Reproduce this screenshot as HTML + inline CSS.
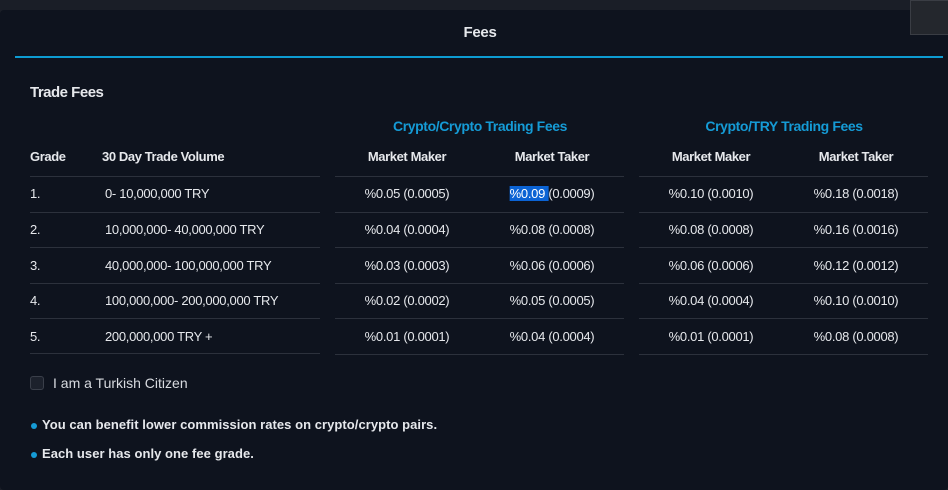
<!DOCTYPE html><html><head><style>
*{margin:0;padding:0;box-sizing:border-box}
body{width:948px;height:482px;background:#1a1e27;font-family:"Liberation Sans",sans-serif;color:#e6e8ec;position:relative;overflow:hidden}
.panel{position:absolute;left:0;top:10px;width:948px;height:480px;background:#0e131e;border-radius:4px}
.t{position:absolute;white-space:nowrap;font-size:13px;letter-spacing:-0.3px}
.b{font-weight:bold}
.c{transform:translateX(-50%)}
.ln{position:absolute;height:1px;background:#2c313c}
.blue{color:#159bd6}
.h{font-size:13px;letter-spacing:-0.4px}
</style></head><body>
<div class="panel"></div>
<div style="position:absolute;left:910px;top:0;width:40px;height:35px;background:#24272d;border:1px solid #3a3d44"></div>
<div class="t b c" style="left:480px;top:24px;font-size:15px">Fees</div>
<div style="position:absolute;left:15px;top:56px;width:928px;height:2px;background:#0d9bd2"></div>
<div class="t b" style="left:30px;top:84px;font-size:15px;letter-spacing:-0.5px">Trade Fees</div>
<div class="t b c blue" style="left:480px;top:118px;font-size:14px;letter-spacing:-0.4px">Crypto/Crypto Trading Fees</div>
<div class="t b c blue" style="left:784px;top:118px;font-size:14px;letter-spacing:-0.4px">Crypto/TRY Trading Fees</div>
<div class="t b h" style="left:30px;top:149px">Grade</div>
<div class="t b h" style="left:102px;top:149px">30 Day Trade Volume</div>
<div class="t b c h" style="left:407px;top:149px">Market Maker</div>
<div class="t b c h" style="left:552px;top:149px">Market Taker</div>
<div class="t b c h" style="left:711px;top:149px">Market Maker</div>
<div class="t b c h" style="left:856px;top:149px">Market Taker</div>
<div class="ln" style="left:30px;top:176px;width:290px"></div><div class="ln" style="left:335px;top:176px;width:289px"></div><div class="ln" style="left:639px;top:176px;width:289px"></div>
<div class="ln" style="left:30px;top:212px;width:290px"></div><div class="ln" style="left:335px;top:212px;width:289px"></div><div class="ln" style="left:639px;top:212px;width:289px"></div>
<div class="ln" style="left:30px;top:247px;width:290px"></div><div class="ln" style="left:335px;top:247px;width:289px"></div><div class="ln" style="left:639px;top:247px;width:289px"></div>
<div class="ln" style="left:30px;top:283px;width:290px"></div><div class="ln" style="left:335px;top:283px;width:289px"></div><div class="ln" style="left:639px;top:283px;width:289px"></div>
<div class="ln" style="left:30px;top:318px;width:290px"></div><div class="ln" style="left:335px;top:318px;width:289px"></div><div class="ln" style="left:639px;top:318px;width:289px"></div>
<div class="ln" style="left:30px;top:353px;width:290px"></div><div class="ln" style="left:335px;top:354px;width:289px"></div><div class="ln" style="left:639px;top:354px;width:289px"></div>

<div class="t" style="left:30px;top:186px">1.</div><div class="t" style="left:105px;top:186px">0- 10,000,000 TRY</div>
<div class="t c" style="left:407px;top:186px">%0.05 (0.0005)</div>
<div class="t c" style="left:552px;top:186px"><span style="background:#0b63d4;color:#fff">%0.09 </span>(0.0009)</div>
<div class="t c" style="left:711px;top:186px">%0.10 (0.0010)</div><div class="t c" style="left:856px;top:186px">%0.18 (0.0018)</div>

<div class="t" style="left:30px;top:222px">2.</div><div class="t" style="left:105px;top:222px">10,000,000- 40,000,000 TRY</div>
<div class="t c" style="left:407px;top:222px">%0.04 (0.0004)</div><div class="t c" style="left:552px;top:222px">%0.08 (0.0008)</div>
<div class="t c" style="left:711px;top:222px">%0.08 (0.0008)</div><div class="t c" style="left:856px;top:222px">%0.16 (0.0016)</div>

<div class="t" style="left:30px;top:258px">3.</div><div class="t" style="left:105px;top:258px">40,000,000- 100,000,000 TRY</div>
<div class="t c" style="left:407px;top:258px">%0.03 (0.0003)</div><div class="t c" style="left:552px;top:258px">%0.06 (0.0006)</div>
<div class="t c" style="left:711px;top:258px">%0.06 (0.0006)</div><div class="t c" style="left:856px;top:258px">%0.12 (0.0012)</div>

<div class="t" style="left:30px;top:293px">4.</div><div class="t" style="left:105px;top:293px">100,000,000- 200,000,000 TRY</div>
<div class="t c" style="left:407px;top:293px">%0.02 (0.0002)</div><div class="t c" style="left:552px;top:293px">%0.05 (0.0005)</div>
<div class="t c" style="left:711px;top:293px">%0.04 (0.0004)</div><div class="t c" style="left:856px;top:293px">%0.10 (0.0010)</div>

<div class="t" style="left:30px;top:329px">5.</div><div class="t" style="left:105px;top:329px">200,000,000 TRY +</div>
<div class="t c" style="left:407px;top:329px">%0.01 (0.0001)</div><div class="t c" style="left:552px;top:329px">%0.04 (0.0004)</div>
<div class="t c" style="left:711px;top:329px">%0.01 (0.0001)</div><div class="t c" style="left:856px;top:329px">%0.08 (0.0008)</div>

<div style="position:absolute;left:30px;top:376px;width:14px;height:14px;border:1px solid #3a3f4a;border-radius:3px;background:#1c212c"></div>
<div class="t" style="left:53px;top:375px;font-size:14px;color:#d8dbe0;letter-spacing:0">I am a Turkish Citizen</div>
<div style="position:absolute;left:31px;top:423px;width:6px;height:6px;border-radius:50%;background:#159bd6"></div>
<div class="t b" style="left:42px;top:417px;letter-spacing:0.05px">You can benefit lower commission rates on crypto/crypto pairs.</div>
<div style="position:absolute;left:31px;top:452px;width:6px;height:6px;border-radius:50%;background:#159bd6"></div>
<div class="t b" style="left:42px;top:446px;letter-spacing:0.05px">Each user has only one fee grade.</div>
</body></html>
